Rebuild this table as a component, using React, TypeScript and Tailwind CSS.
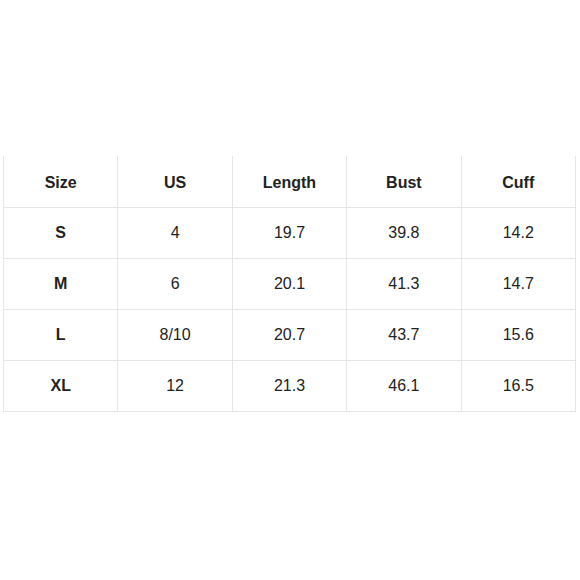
const rows = [
  ["S", "4", "19.7", "39.8", "14.2"],
  ["M", "6", "20.1", "41.3", "14.7"],
  ["L", "8/10", "20.7", "43.7", "15.6"],
  ["XL", "12", "21.3", "46.1", "16.5"],
];

const headers = ["Size", "US", "Length", "Bust", "Cuff"];

export default function App() {
  return (
    <div className="h-[580px] w-[580px] bg-white pl-[3px] pt-[156px] font-['Liberation_Sans',Arial,sans-serif] text-[16px] text-[#222]">
      <table className="w-[573px] table-fixed border-collapse">
        <thead>
          <tr className="h-[51px]">
            {headers.map((h) => (
              <th
                key={h}
                className="border-x border-b border-[#e6e6e6] pt-[3px] text-center font-bold"
              >
                {h}
              </th>
            ))}
          </tr>
        </thead>
        <tbody>
          {rows.map((row) => (
            <tr key={row[0]} className="h-[51px]">
              {row.map((cell, i) => (
                <td
                  key={i}
                  className={
                    i === 0
                      ? "border border-[#e6e6e6] text-center font-bold"
                      : "border border-[#e6e6e6] text-center"
                  }
                >
                  {cell}
                </td>
              ))}
            </tr>
          ))}
        </tbody>
      </table>
    </div>
  );
}
